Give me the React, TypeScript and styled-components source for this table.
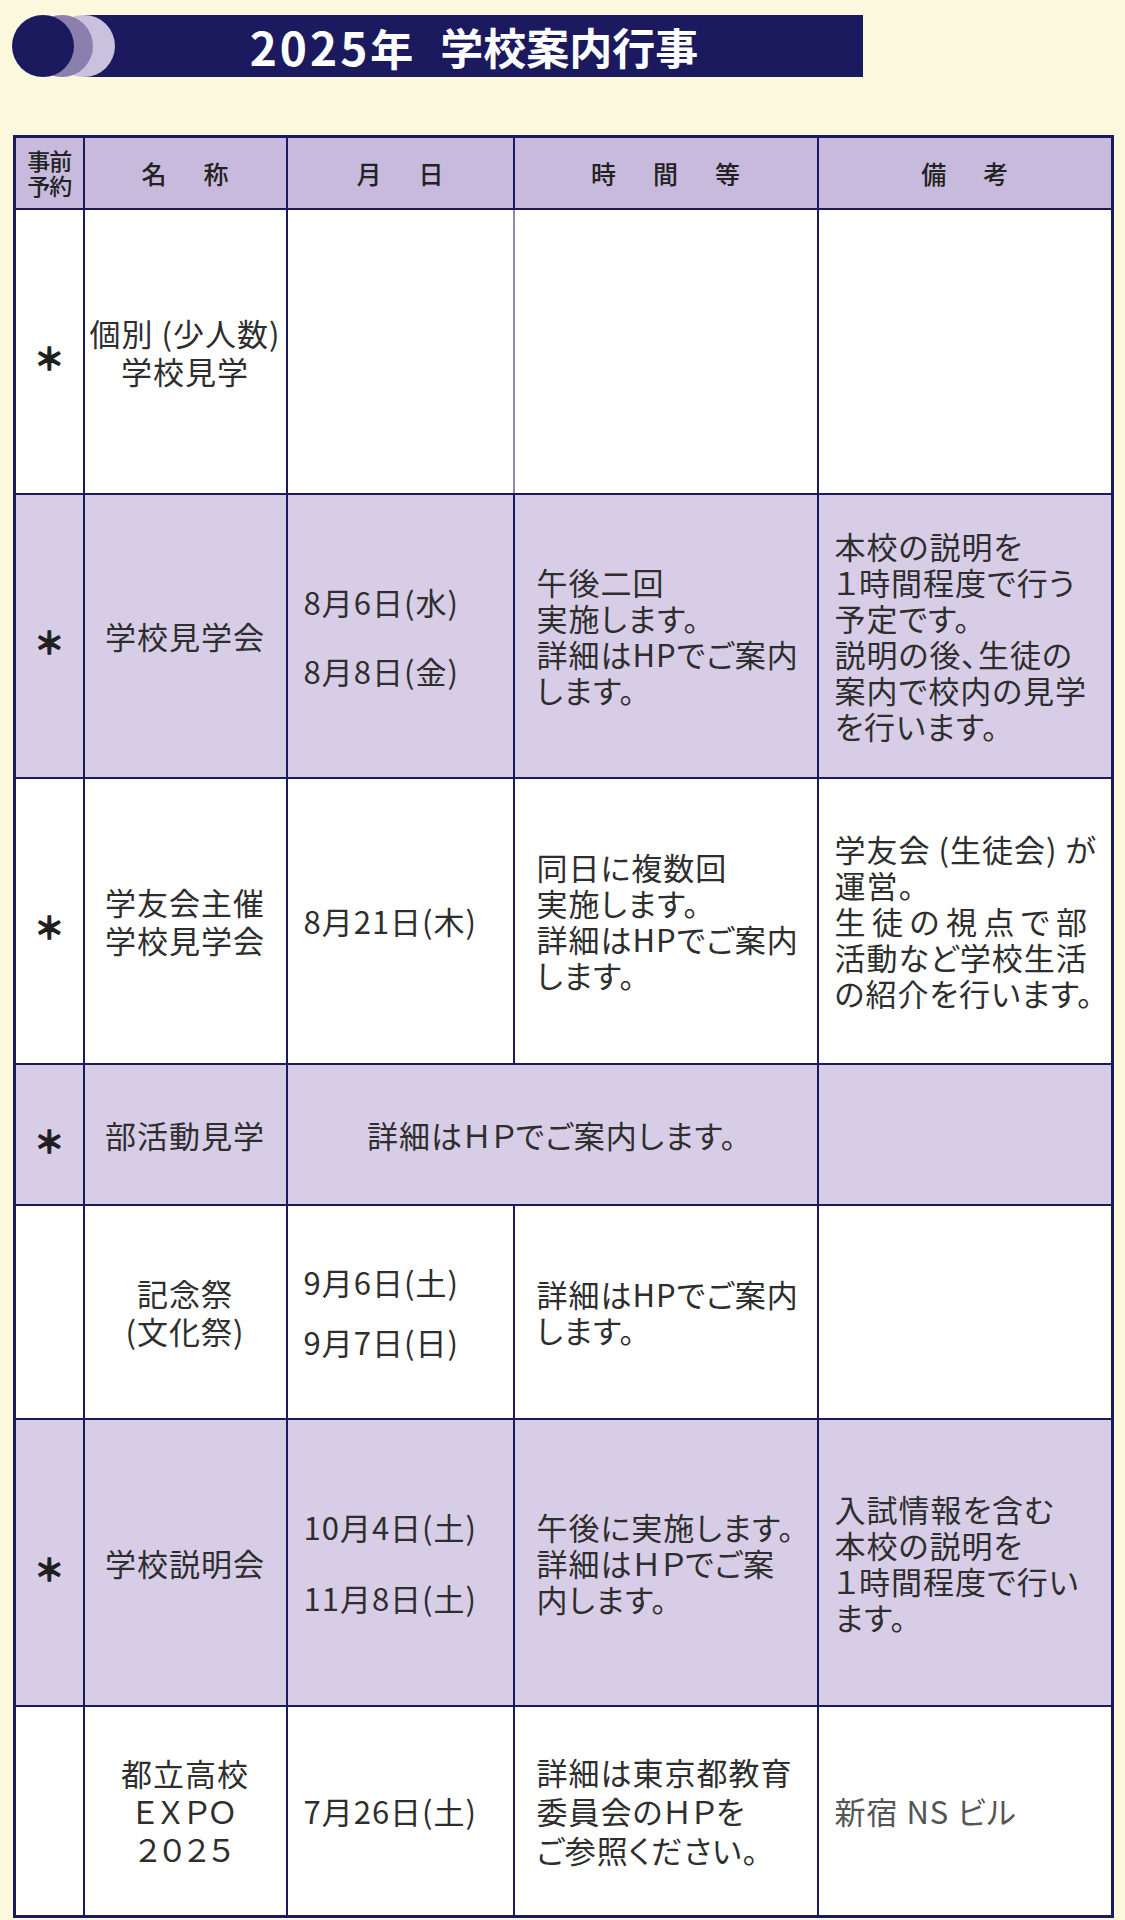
import React from 'react';
import styled, { createGlobalStyle } from 'styled-components';

const NAVY = '#1b1a5f';
const SHADE = '#d8cde6';
const HEAD = '#c7badc';
const INK = '#2e2e2e';

const GlobalStyle = createGlobalStyle`
  body {
    margin: 0;
    background: #fbf8de;
  }
`;

const Page = styled.div`
  padding: 15px 14px 0 12px;
  font-family: 'Noto Sans CJK JP', 'Noto Sans', sans-serif;
  color: ${INK};
`;

const Banner = styled.header`
  display: flex;
  width: 851px;
  height: 62px;
`;

const TitleBar = styled.h1`
  flex: 1;
  margin: 0;
  display: flex;
  align-items: center;
  justify-content: center;
  padding-right: 30px;
  background: ${NAVY};
  color: #fff;
  font-size: 43px;
  font-weight: 700;
  line-height: 1;
  white-space: nowrap;
`;

const Year = styled.span`
  letter-spacing: 3px;
  margin-right: 24px;
`;

const Digits = styled.span`
  font-size: 46px;
`;

const Schedule = styled.table`
  margin: 58px 0 0 1px;
  width: 1098px;
  border-collapse: collapse;
  table-layout: fixed;
  border: 3px solid ${NAVY};
`;

const HeadCell = styled.th<{ $spread?: boolean }>`
  height: 70px;
  padding: 0 0 0 ${({ $spread }) => ($spread ? '6px' : '0')};
  background: ${HEAD};
  border: 2px solid ${NAVY};
  font-size: ${({ $spread }) => ($spread ? '25px' : '23px')};
  font-weight: 500;
  line-height: ${({ $spread }) => ($spread ? '1' : '25px')};
  letter-spacing: ${({ $spread }) => ($spread ? '6px' : '-1px')};
  color: #222;
  white-space: nowrap;
`;

const Row = styled.tr<{ $shade?: boolean; $h: number }>`
  height: ${({ $h }) => $h}px;
  background: ${({ $shade }) => ($shade ? SHADE : '#fff')};
`;

const Cell = styled.td<{ $pad?: number; $center?: boolean; $soft?: boolean }>`
  padding: 0 0 0 ${({ $pad }) => $pad ?? 0}px;
  border: 2px solid ${NAVY};
  border-right-color: ${({ $soft }) => ($soft ? '#8d8cae' : NAVY)};
  text-align: ${({ $center }) => ($center ? 'center' : 'left')};
  vertical-align: middle;
  font-size: 31px;
  line-height: 36px;
  letter-spacing: 1px;
  font-feature-settings: 'palt';
  white-space: nowrap;
`;

const Mark = styled.span`
  display: inline-block;
  padding-top: 10px;
  font-size: 30px;
  font-weight: 700;
  letter-spacing: 0;
  color: #1f1f1f;
  -webkit-text-stroke: 1.3px #1f1f1f;
`;

const Lines = styled.div<{ $gap?: number; $lh?: number }>`
  display: flex;
  flex-direction: column;
  gap: ${({ $gap }) => $gap ?? 0}px;
  line-height: ${({ $lh }) => $lh ?? 36}px;
`;

const Note = styled.span<{ $muted?: boolean }>`
  color: ${({ $muted }) => ($muted ? '#555' : 'inherit')};
`;

const Spread = styled.span`
  letter-spacing: 6.5px;
`;

type Entry = {
  mark: boolean;
  name: string[];
  dates?: string[];
  dateGap?: number;
  time?: React.ReactNode[];
  note?: React.ReactNode[];
  wide?: string;
  muted?: boolean;
  shade?: boolean;
  h: number;
  soft?: boolean;
};

const entries: Entry[] = [
  { mark: true, name: ['個別 (少人数)', '学校見学'], h: 285, soft: true },
  {
    mark: true,
    shade: true,
    name: ['学校見学会'],
    dates: ['8月6日(水)', '8月8日(金)'],
    dateGap: 33,
    time: ['午後二回', '実施します。', '詳細はHPでご案内', 'します。'],
    note: ['本校の説明を', '１時間程度で行う', '予定です。', '説明の後、生徒の', '案内で校内の見学', 'を行います。'],
    h: 284,
  },
  {
    mark: true,
    name: ['学友会主催', '学校見学会'],
    dates: ['8月21日(木)'],
    time: ['同日に複数回', '実施します。', '詳細はHPでご案内', 'します。'],
    note: ['学友会 (生徒会) が', '運営。', <Spread key="s">生徒の視点で部</Spread>, '活動など学校生活', 'の紹介を行います。'],
    h: 286,
  },
  { mark: true, shade: true, name: ['部活動見学'], wide: '詳細はＨＰでご案内します。', h: 141 },
  {
    mark: false,
    name: ['記念祭', '(文化祭)'],
    dates: ['9月6日(土)', '9月7日(日)'],
    dateGap: 24,
    time: ['詳細はHPでご案内', 'します。'],
    h: 214,
  },
  {
    mark: true,
    shade: true,
    name: ['学校説明会'],
    dates: ['10月4日(土)', '11月8日(土)'],
    dateGap: 35,
    time: ['午後に実施します。', '詳細はＨＰでご案', '内します。'],
    note: ['入試情報を含む', '本校の説明を', '１時間程度で行い', 'ます。'],
    h: 287,
  },
  {
    mark: false,
    name: ['都立高校', 'ＥＸＰＯ', '２０２５'],
    dates: ['7月26日(土)'],
    time: ['詳細は東京都教育', '委員会のＨＰを', 'ご参照ください。'],
    note: ['新宿 NS ビル'],
    muted: true,
    h: 210,
  },
];

const Ornament = () => (
  <svg width="103" height="62" viewBox="0 0 103 62" aria-hidden="true">
    <rect x="72" y="0" width="31" height="62" fill={NAVY} />
    <circle cx="72" cy="31" r="31" fill="#c9c1dd" />
    <circle cx="50" cy="31" r="31" fill="#8b80ad" />
    <circle cx="31" cy="31" r="31" fill={NAVY} />
  </svg>
);

const App = () => (
  <>
    <GlobalStyle />
    <Page>
      <Banner>
        <Ornament />
        <TitleBar>
          <Year>
            <Digits>2025</Digits>年
          </Year>
          学校案内行事
        </TitleBar>
      </Banner>
      <Schedule>
        <colgroup>
          <col style={{ width: 69 }} />
          <col style={{ width: 203 }} />
          <col style={{ width: 227 }} />
          <col style={{ width: 304 }} />
          <col style={{ width: 295 }} />
        </colgroup>
        <thead>
          <tr>
            <HeadCell>
              事前
              <br />
              予約
            </HeadCell>
            <HeadCell $spread>名　称</HeadCell>
            <HeadCell $spread>月　日</HeadCell>
            <HeadCell $spread>時　間　等</HeadCell>
            <HeadCell $spread>備　考</HeadCell>
          </tr>
        </thead>
        <tbody>
          {entries.map((e, i) => (
            <Row key={i} $shade={e.shade} $h={e.h}>
              <Cell $center>{e.mark && <Mark>＊</Mark>}</Cell>
              <Cell $center>
                <Lines $lh={38}>
                  {e.name.map((n) => (
                    <span key={n}>{n}</span>
                  ))}
                </Lines>
              </Cell>
              {e.wide ? (
                <Cell $center colSpan={2}>
                  {e.wide}
                </Cell>
              ) : (
                <>
                  <Cell $pad={16} $soft={e.soft}>
                    {e.dates && (
                      <Lines $gap={e.dateGap}>
                        {e.dates.map((d) => (
                          <span key={d}>{d}</span>
                        ))}
                      </Lines>
                    )}
                  </Cell>
                  <Cell $pad={22}>
                    {e.time && (
                      <Lines $lh={e.h < 250 && e.time.length > 2 ? 39 : 36}>
                        {e.time.map((t, k) => (
                          <span key={k}>{t}</span>
                        ))}
                      </Lines>
                    )}
                  </Cell>
                </>
              )}
              <Cell $pad={16}>
                {e.note && (
                  <Lines>
                    {e.note.map((n, k) => (
                      <Note key={k} $muted={e.muted}>
                        {n}
                      </Note>
                    ))}
                  </Lines>
                )}
              </Cell>
            </Row>
          ))}
        </tbody>
      </Schedule>
    </Page>
  </>
);

export default App;
